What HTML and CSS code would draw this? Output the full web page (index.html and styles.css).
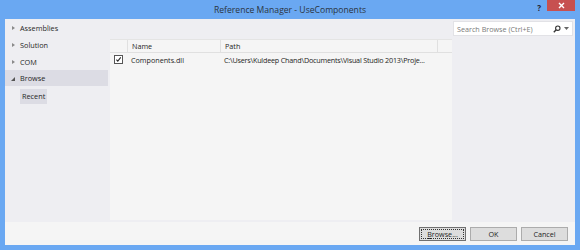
FILE: index.html
```html
<!DOCTYPE html>
<html>
<head>
<meta charset="utf-8">
<link rel="stylesheet" href="styles.css">
</head>
<body>
<div class="window">
  <div class="titlebar">
    <div class="title">Reference Manager - UseComponents</div>
    <div class="tb-help">?</div>
    <div class="tb-close">
      <svg width="7" height="7" viewBox="0 0 7 7"><path d="M1 1L6 6M6 1L1 6" stroke="#fff" stroke-width="1.4"/></svg>
    </div>
  </div>
  <div class="client">
    <div class="main">
      <div class="nav">
        <div class="nav-item"><span class="tri-r"></span>Assemblies</div>
        <div class="nav-item"><span class="tri-r"></span>Solution</div>
        <div class="nav-item"><span class="tri-r"></span>COM</div>
        <div class="nav-item selected"><span class="tri-d"></span>Browse</div>
        <div class="nav-sub"><span class="recent">Recent</span></div>
      </div>
      <div class="center">
        <div class="grid">
          <div class="grid-head">
            <div class="c-check"></div>
            <div class="c-name">Name</div>
            <div class="c-path">Path</div>
            <div class="c-end"></div>
          </div>
          <div class="grid-row">
            <div class="c-check"><span class="checkbox"><svg width="9" height="9" viewBox="0 0 9 9"><path d="M1.8 4.6L3.6 6.6L7.4 1.8" fill="none" stroke="#222" stroke-width="1.3"/></svg></span></div>
            <div class="c-name">Components.dll</div>
            <div class="c-path">C:\Users\Kuldeep Chand\Documents\Visual Studio 2013\Proje...</div>
          </div>
        </div>
      </div>
      <div class="side">
        <div class="search">
          <span class="search-text">Search Browse (Ctrl+E)</span>
          <svg class="mag" width="8" height="8" viewBox="0 0 8 8"><circle cx="4.8" cy="3.2" r="2.2" fill="none" stroke="#333" stroke-width="1.1"/><path d="M3.2 4.8L0.8 7.2" stroke="#333" stroke-width="1.4"/></svg>
          <svg class="drop" width="5" height="3" viewBox="0 0 5 3"><path d="M0 0H5L2.5 3Z" fill="#666"/></svg>
        </div>
      </div>
    </div>
    <div class="bottom">
      <button class="btn focused"><u>B</u>rowse...</button>
      <button class="btn">OK</button>
      <button class="btn">Cancel</button>
    </div>
  </div>
</div>
</body>
</html>
```
FILE: styles.css
```css
html, body {
  margin: 0;
  padding: 0;
  width: 580px;
  height: 250px;
  overflow: hidden;
  font-family: "Open Sans", "Noto Sans", sans-serif;
}
.window {
  width: 580px;
  height: 250px;
  box-sizing: border-box;
  background: #6aa8f2;
  padding: 0 5px 5px 5px;
  display: flex;
  flex-direction: column;
}
.titlebar {
  height: 19px;
  position: relative;
  display: flex;
  align-items: center;
  justify-content: center;
}
.title {
  font-size: 8.6px;
  color: #2b3440;
  padding-top: 1px;
}
.tb-help {
  position: absolute;
  right: 34px;
  top: 2px;
  font-size: 8px;
  font-weight: bold;
  color: #223;
}
.tb-close {
  position: absolute;
  right: 0;
  top: 0;
  width: 28px;
  height: 11px;
  background: #c75050;
  display: flex;
  align-items: center;
  justify-content: center;
}
.client {
  flex: 1;
  display: flex;
  flex-direction: column;
  background: #eeeef2;
}
.main {
  flex: 1;
  display: flex;
}
.nav {
  width: 105px;
  display: flex;
  flex-direction: column;
}
.nav-item {
  height: 17px;
  display: flex;
  align-items: center;
  font-size: 7.3px;
  color: #1e1e1e;
  padding-left: 6px;
  margin-right: 2px;
}
.nav-item.selected {
  background: #dcdce4;
  height: 16px;
}
.tri-r {
  width: 0;
  height: 0;
  border-top: 2.5px solid transparent;
  border-bottom: 2.5px solid transparent;
  border-left: 3px solid #8a8a8a;
  margin: 0 5px 0 1px;
}
.tri-d {
  width: 0;
  height: 0;
  border-left: 4px solid transparent;
  border-bottom: 4px solid #555;
  margin: 1px 5px 0 0;
}
.nav-sub {
  padding: 3px 0 0 15px;
  font-size: 7.3px;
  color: #1e1e1e;
}
.recent {
  display: inline-block;
  background: #dcdce4;
  padding: 2px 2px 3px 2px;
}
.center {
  width: 342px;
  padding: 20px 0 2px 0;
  display: flex;
}
.grid {
  flex: 1;
  background: #f5f5f5;
}
.grid-head {
  display: flex;
  height: 12px;
  border-top: 1px solid #e4e4e4;
  border-bottom: 1px solid #e0e0e0;
  font-size: 7.2px;
  color: #1e1e1e;
}
.grid-head > div {
  display: flex;
  align-items: center;
  padding-left: 4px;
  box-sizing: border-box;
}
.grid-head > div + div {
  border-left: 1px solid #e0e0e0;
}
.c-check { width: 17px; padding-left: 0 !important; }
.c-name { width: 93px; }
.c-path { width: 217px; }
.c-end { flex: 1; }
.grid-row {
  display: flex;
  height: 13px;
  font-size: 7.2px;
  color: #1e1e1e;
}
.grid-row > div {
  display: flex;
  align-items: center;
  padding-left: 4px;
  box-sizing: border-box;
  white-space: nowrap;
}
.grid-row .c-path { width: auto; padding-left: 4px; letter-spacing: -0.2px; }
.checkbox {
  width: 9px;
  height: 9px;
  box-sizing: border-box;
  border: 1px solid #555;
  background: #fff;
  margin-left: 4px;
  display: flex;
  align-items: center;
  justify-content: center;
}
.checkbox svg { display: block; }
.side {
  flex: 1;
  padding: 2px 2px 0 1px;
}
.search {
  height: 15px;
  background: #fff;
  border: 1px solid #e2e2e6;
  box-sizing: border-box;
  display: flex;
  align-items: center;
  padding: 0 3px 0 3px;
}
.search-text {
  flex: 1;
  font-size: 7.2px;
  color: #7a7a7a;
}
.mag { margin-right: 3px; }
.bottom {
  height: 23px;
  background: #f5f5f5;
  display: flex;
  align-items: center;
  justify-content: flex-end;
  gap: 4px;
  padding-right: 7px;
}
.btn {
  width: 47px;
  height: 14px;
  background: #dddddd;
  border: 1px solid #acacac;
  font-family: "Open Sans", "Noto Sans", sans-serif;
  font-size: 7.2px;
  color: #1e1e1e;
  padding: 0;
  margin: 0;
}
.btn.focused {
  border: 1px solid #707070;
  outline: 1px dotted #333;
  outline-offset: -3px;
}
```
